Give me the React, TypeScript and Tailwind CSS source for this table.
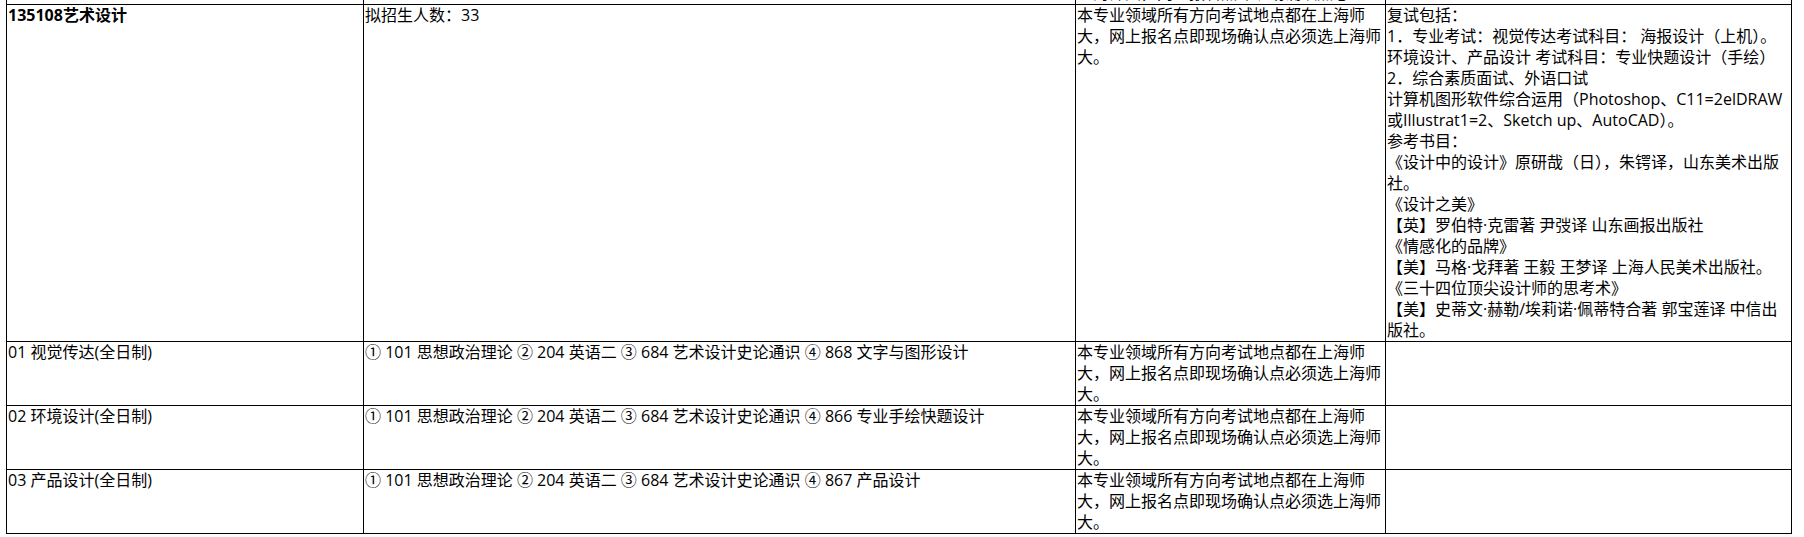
const courses =
  '① 101 思想政治理论 ② 204 英语二 ③ 684 艺术设计史论通识 ④ ';

const placeLines = [
  '本专业领域所有方向考试地点都在上海师',
  '大，网上报名点即现场确认点必须选上海师',
  '大。',
];

const retestLines = [
  '复试包括：',
  '1．专业考试：视觉传达考试科目： 海报设计（上机）。',
  '环境设计、产品设计 考试科目：专业快题设计（手绘）',
  '2．综合素质面试、外语口试',
  '计算机图形软件综合运用（Photoshop、C11=2elDRAW',
  '或Illustrat1=2、Sketch up、AutoCAD）。',
  '参考书目：',
  '《设计中的设计》原研哉（日），朱锷译，山东美术出版',
  '社。',
  '《设计之美》',
  '【英】罗伯特·克雷著 尹弢译 山东画报出版社',
  '《情感化的品牌》',
  '【美】马格·戈拜著 王毅 王梦译 上海人民美术出版社。',
  '《三十四位顶尖设计师的思考术》',
  '【美】史蒂文·赫勒/埃莉诺·佩蒂特合著 郭宝莲译 中信出',
  '版社。',
];

const directions = [
  { name: '01 视觉传达(全日制)', last: '868 文字与图形设计' },
  { name: '02 环境设计(全日制)', last: '866 专业手绘快题设计' },
  { name: '03 产品设计(全日制)', last: '867 产品设计' },
];

function Lines({ lines }: { lines: string[] }) {
  return (
    <>
      {lines.map((line, i) => (
        <div key={i} className="whitespace-nowrap">
          {line}
        </div>
      ))}
    </>
  );
}

function Cell({ children }: { children?: React.ReactNode }) {
  return <div className="border-l border-t border-black pl-[1px]">{children}</div>;
}

export default function App() {
  return (
    <div
      className="h-[537px] w-full overflow-hidden bg-white pl-[6px] text-[16px] leading-[21px] text-black"
      style={{ fontFamily: '"Open Sans", "Noto Sans CJK SC", sans-serif' }}
    >
      <div className="-mt-[18px] grid w-[1786px] grid-cols-[357px_712px_310px_406px] border-b border-r border-black">
        {/* previous row, only its last line peeks in */}
        <Cell />
        <Cell />
        <Cell>
          <div className="whitespace-nowrap">上海师大，网上报名点即现场确认点必</div>
        </Cell>
        <Cell />

        {/* major header row */}
        <Cell>
          <span className="font-bold">135108艺术设计</span>
        </Cell>
        <Cell>拟招生人数：33</Cell>
        <Cell>
          <Lines lines={placeLines} />
        </Cell>
        <Cell>
          <Lines lines={retestLines} />
        </Cell>

        {directions.map((d) => (
          <div key={d.name} className="contents">
            <Cell>{d.name}</Cell>
            <Cell>
              <div className="whitespace-nowrap">
                {courses}
                {d.last}
              </div>
            </Cell>
            <Cell>
              <Lines lines={placeLines} />
            </Cell>
            <Cell />
          </div>
        ))}
      </div>
    </div>
  );
}
